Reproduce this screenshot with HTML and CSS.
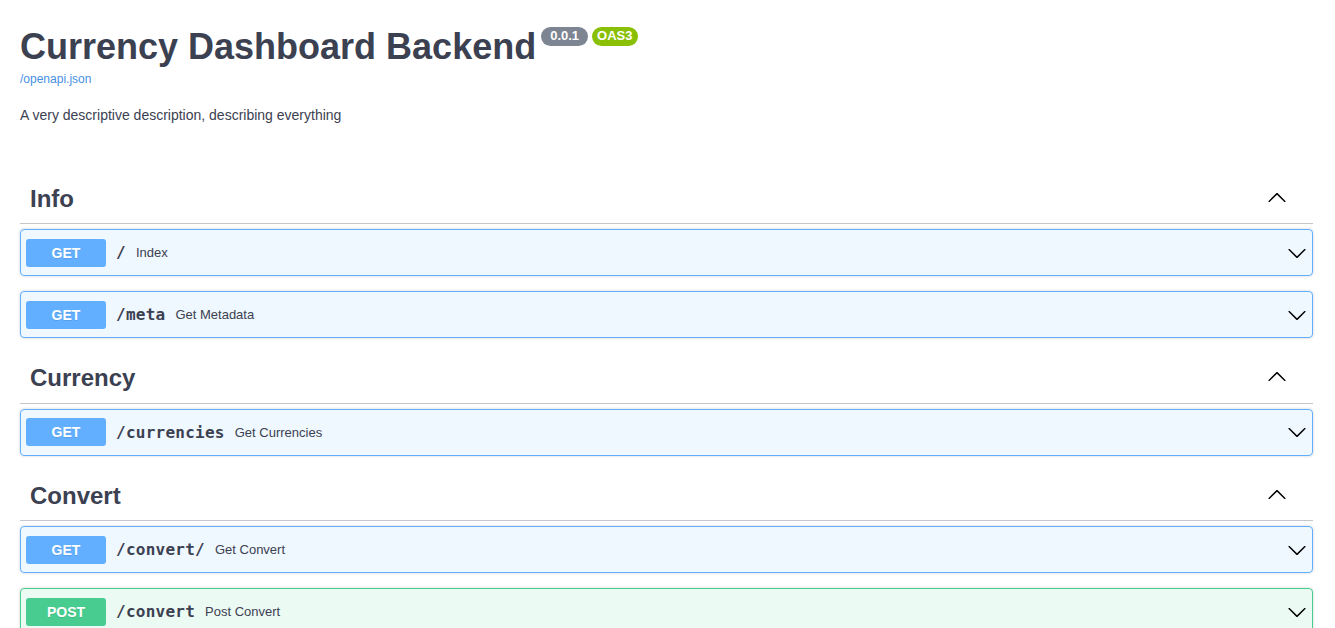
FILE: index.html
```html
<!DOCTYPE html>
<html lang="en">
<head>
<meta charset="utf-8">
<title>Currency Dashboard Backend - Swagger UI</title>
<link rel="stylesheet" href="styles.css">
</head>
<body>
<svg class="defs" xmlns="http://www.w3.org/2000/svg">
  <defs>
    <symbol id="arrow-up" viewBox="0 0 20 20"><path d="M17.418 14.908c.272.268.709.268.979 0s.271-.701 0-.969l-7.908-7.83c-.27-.268-.707-.268-.979 0l-7.908 7.83c-.27.268-.27.701 0 .969.271.268.709.268.979 0L10 7.767l7.418 7.141z"/></symbol>
    <symbol id="arrow-down" viewBox="0 0 20 20"><path d="M17.418 6.109c.272-.268.709-.268.979 0s.271.701 0 .969l-7.908 7.83c-.27.268-.707.268-.979 0l-7.908-7.83c-.27-.268-.27-.701 0-.969.271-.268.709-.268.979 0L10 13.25l7.418-7.141z"/></symbol>
  </defs>
</svg>
<div class="wrapper">
  <div class="info">
    <h2 class="title">Currency Dashboard Backend<span class="badge badge-version">0.0.1</span><span class="badge badge-oas">OAS3</span></h2>
    <a class="link" href="#">/openapi.json</a>
    <p class="description">A very descriptive description, describing everything</p>
  </div>

  <section class="tag-section">
    <div class="tag">
      <h3 class="tag-name">Info</h3>
      <svg class="tag-arrow" width="20" height="20"><use href="#arrow-up"/></svg>
    </div>
    <div class="opblock get">
      <span class="method">GET</span>
      <span class="path">/</span>
      <span class="summary">Index</span>
      <svg class="op-arrow" width="20" height="20"><use href="#arrow-down"/></svg>
    </div>
    <div class="opblock get">
      <span class="method">GET</span>
      <span class="path">/meta</span>
      <span class="summary">Get Metadata</span>
      <svg class="op-arrow" width="20" height="20"><use href="#arrow-down"/></svg>
    </div>
  </section>

  <section class="tag-section">
    <div class="tag">
      <h3 class="tag-name">Currency</h3>
      <svg class="tag-arrow" width="20" height="20"><use href="#arrow-up"/></svg>
    </div>
    <div class="opblock get">
      <span class="method">GET</span>
      <span class="path">/currencies</span>
      <span class="summary">Get Currencies</span>
      <svg class="op-arrow" width="20" height="20"><use href="#arrow-down"/></svg>
    </div>
  </section>

  <section class="tag-section">
    <div class="tag">
      <h3 class="tag-name">Convert</h3>
      <svg class="tag-arrow" width="20" height="20"><use href="#arrow-up"/></svg>
    </div>
    <div class="opblock get">
      <span class="method">GET</span>
      <span class="path">/convert/</span>
      <span class="summary">Get Convert</span>
      <svg class="op-arrow" width="20" height="20"><use href="#arrow-down"/></svg>
    </div>
    <div class="opblock post">
      <span class="method">POST</span>
      <span class="path">/convert</span>
      <span class="summary">Post Convert</span>
      <svg class="op-arrow" width="20" height="20"><use href="#arrow-down"/></svg>
    </div>
  </section>
</div>
</body>
</html>
```

FILE: styles.css
```css
html, body {
  margin: 0;
  padding: 0;
  background: #fff;
}

body {
  font-family: "Liberation Sans", Arial, sans-serif;
  color: #3b4151;
}

.defs {
  display: none;
}

.wrapper {
  padding: 0 22px 0 20px;
}

.info {
  margin: 26px 0 50.5px;
}

.title {
  margin: 0;
  font-size: 36px;
  font-weight: 700;
  color: #3b4151;
  line-height: normal;
}

.badge {
  display: inline-block;
  vertical-align: top;
  margin: 1px 0 0 5px;
  border-radius: 57px;
  font-size: 13px;
  line-height: 18.5px;
  font-weight: 700;
  color: #fff;
}

.badge-version {
  background: #7d8492;
  padding: 0 9px;
}

.badge-oas {
  background: #89bf04;
  margin-left: 4px;
  padding: 0 5px;
}

.link {
  display: block;
  margin-top: 4px;
  font-size: 12px;
  line-height: 14px;
  color: #4990e2;
  text-decoration: none;
}

.description {
  margin: 21px 0 0;
  font-size: 14px;
  line-height: 16px;
  color: #3b4151;
}

.tag-section {
  display: flex;
  flex-direction: column;
}

.tag {
  display: flex;
  align-items: center;
  height: 29.5px;
  padding: 10px 26px 10px 10px;
  margin-bottom: 5px;
  border-bottom: 1px solid rgba(59, 65, 81, 0.3);
}

.tag-name {
  flex: 1;
  margin: 0;
  font-size: 24px;
  font-weight: 700;
  line-height: 29.5px;
  color: #3b4151;
}

.tag-arrow {
  fill: #000;
  margin-top: -3px;
}

.opblock {
  display: flex;
  align-items: center;
  height: 35px;
  padding: 5px;
  margin-bottom: 15px;
  border: 1px solid;
  border-radius: 4px;
  box-shadow: 0 0 3px rgba(0, 0, 0, 0.19);
}

.opblock.get {
  background: rgba(97, 175, 254, 0.1);
  border-color: #61affe;
}

.opblock.post {
  background: rgba(73, 204, 144, 0.1);
  border-color: #49cc90;
}

.method {
  min-width: 80px;
  padding: 6px 0;
  border-radius: 3px;
  font-size: 14px;
  line-height: 16px;
  font-weight: 700;
  color: #fff;
  text-align: center;
  text-shadow: 0 1px 0 rgba(0, 0, 0, 0.1);
}

.get .method {
  background: #61affe;
}

.post .method {
  background: #49cc90;
}

.path {
  padding: 0 10px;
  font-family: "DejaVu Sans Mono", monospace;
  font-size: 16px;
  font-weight: 600;
  letter-spacing: 0.25px;
  color: #3b4151;
}

.summary {
  flex: 1;
  font-size: 13px;
  color: #3b4151;
}

.op-arrow {
  fill: #000;
  flex: none;
}
```
